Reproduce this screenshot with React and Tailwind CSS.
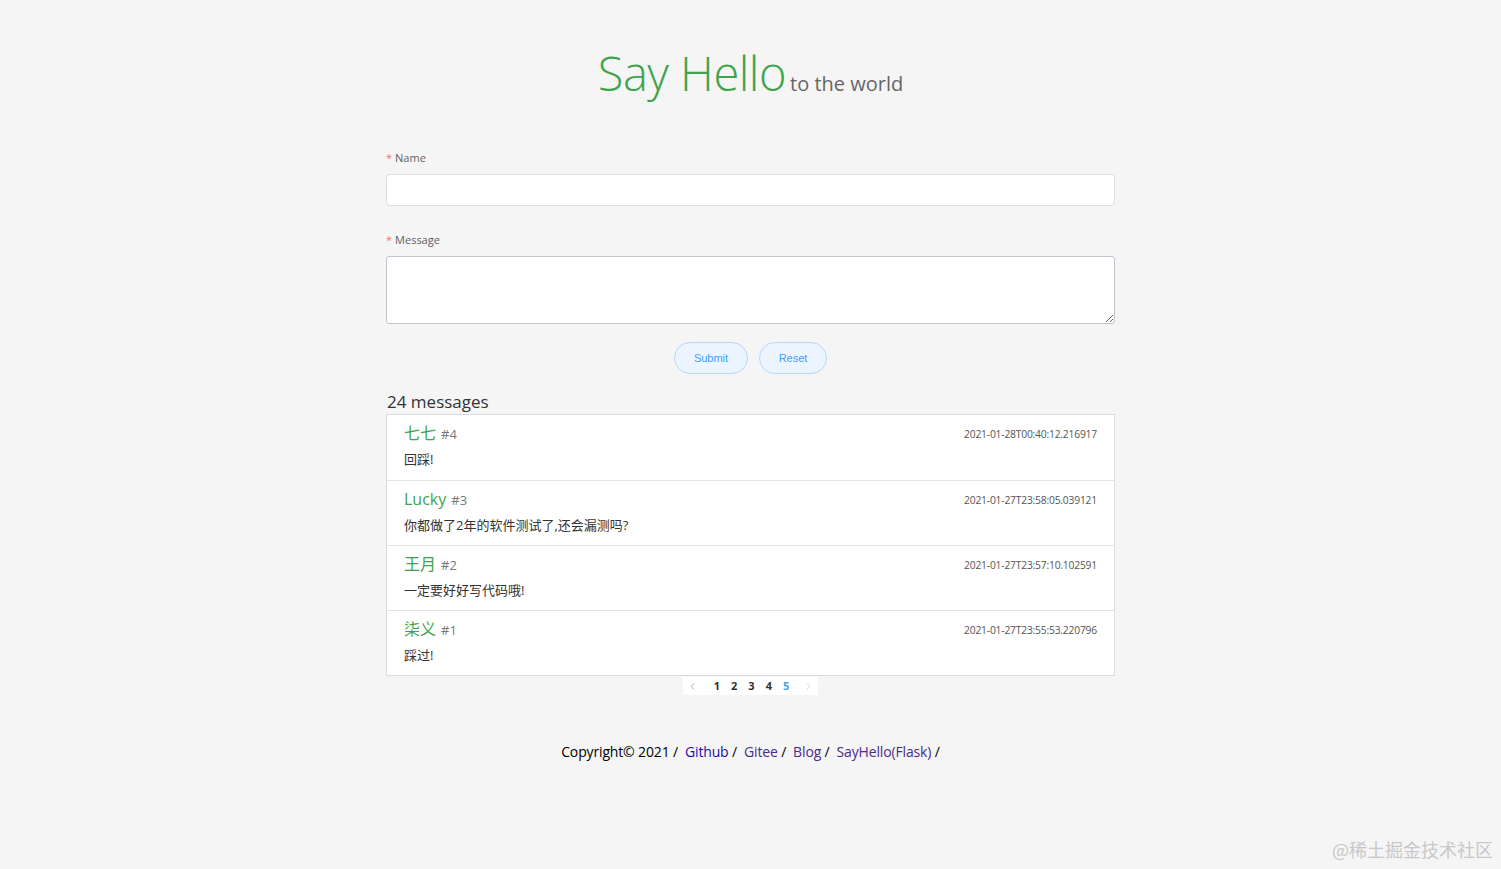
import { ChevronLeft, ChevronRight } from "lucide-react";

export default function App() {
  const font = { fontFamily: '"Open Sans", "Noto Sans CJK SC", sans-serif' };
  const msgs = [
    { name: "七七", id: 4, time: "2021-01-28T00:40:12.216917", body: "回踩!" },
    { name: "Lucky", id: 3, time: "2021-01-27T23:58:05.039121", body: "你都做了2年的软件测试了,还会漏测吗?" },
    { name: "王月", id: 2, time: "2021-01-27T23:57:10.102591", body: "一定要好好写代码哦!" },
    { name: "柒义", id: 1, time: "2021-01-27T23:55:53.220796", body: "踩过!" },
  ];
  return (
    <div className="min-h-[869px] bg-[#f5f5f5] relative" style={font}>
      <div className="w-[729px] mx-auto pt-[42px]">
        <div className="flex items-baseline justify-center h-[62px]">
          <span className="text-[47px] leading-[62px] font-light text-[#3fa34d] tracking-[-0.5px]">Say Hello</span>
          <span className="text-[20px] text-[#666] ml-[4px]">to the world</span>
        </div>
        <div className="mt-[46px] text-[11px] leading-[16px] text-[#606266]">
          <span className="text-[#f56c6c] mr-[3px]">*</span>Name
        </div>
        <div className="mt-[8px] h-[32px] bg-white border border-[#dcdfe6] rounded-[4px]" />
        <div className="mt-[26px] text-[11px] leading-[16px] text-[#606266]">
          <span className="text-[#f56c6c] mr-[3px]">*</span>Message
        </div>
        <textarea className="mt-[8px] block w-full h-[68px] bg-white border border-[#c0c4cc] rounded-[3px] resize-y" />
        <div className="mt-[18px] flex justify-center gap-[11px] h-[32px]">
          <button className="w-[74px] h-[32px] rounded-full bg-[#ecf5ff] border border-[#b3d8ff] text-[#409eff] text-[11px] font-['Liberation_Sans',sans-serif]">Submit</button>
          <button className="w-[68px] h-[32px] rounded-full bg-[#ecf5ff] border border-[#b3d8ff] text-[#409eff] text-[11px] font-['Liberation_Sans',sans-serif]">Reset</button>
        </div>
        <div className="mt-[17px] text-[17px] leading-[22px] text-[#333] ml-[1px]">24 messages</div>
        <div className="mt-[1px] bg-white border border-[#dcdcdc]">
          {msgs.map((m, i) => (
            <div key={m.id} className={"h-[65px] px-[17px] pt-[7px] " + (i > 0 ? "border-t border-[#e3e3e3]" : "")}>
              <div className="flex items-center justify-between h-[22px]">
                <div className="flex items-baseline">
                  <span className="text-[16px] text-[#3fa34d]">{m.name}</span>
                  <span className="text-[13px] text-[#777] ml-[5px]">#{m.id}</span>
                </div>
                <span className="text-[10.3px] text-[#555] tracking-[-0.2px] mt-[3px]">{m.time}</span>
              </div>
              <div className="mt-[5px] text-[13px] text-[#333] leading-[20px]">{m.body}</div>
            </div>
          ))}
        </div>
        <div className="flex justify-center">
          <div className="mt-[1px] flex items-center bg-white h-[18px] px-[4px] gap-[11px] text-[11px] font-bold text-[#303133]">
            <ChevronLeft size={11} strokeWidth={1.5} className="text-[#888]" />
            <span className="ml-[5px]">1</span>
            <span>2</span>
            <span>3</span>
            <span>4</span>
            <span className="text-[#409eff]">5</span>
            <ChevronRight size={11} strokeWidth={1.5} className="text-[#bbb] ml-[3px]" />
          </div>
        </div>
        <div className="mt-[46px] text-center text-[14px] text-black tracking-[-0.15px]">
          Copyright© 2021 /&nbsp; <a className="text-[#1a0dab]">Github</a> /&nbsp; <a className="text-[#4b2a8a]">Gitee</a> /&nbsp; <a className="text-[#4b2a8a]">Blog</a> /&nbsp; <a className="text-[#4b2a8a]">SayHello(Flask)</a> /
        </div>
      </div>
      <div className="absolute right-[8px] bottom-[6px] text-[18px] text-[#c8c8c8]" style={{ fontFamily: '"Noto Sans CJK SC", sans-serif' }}>@稀土掘金技术社区</div>
    </div>
  );
}
